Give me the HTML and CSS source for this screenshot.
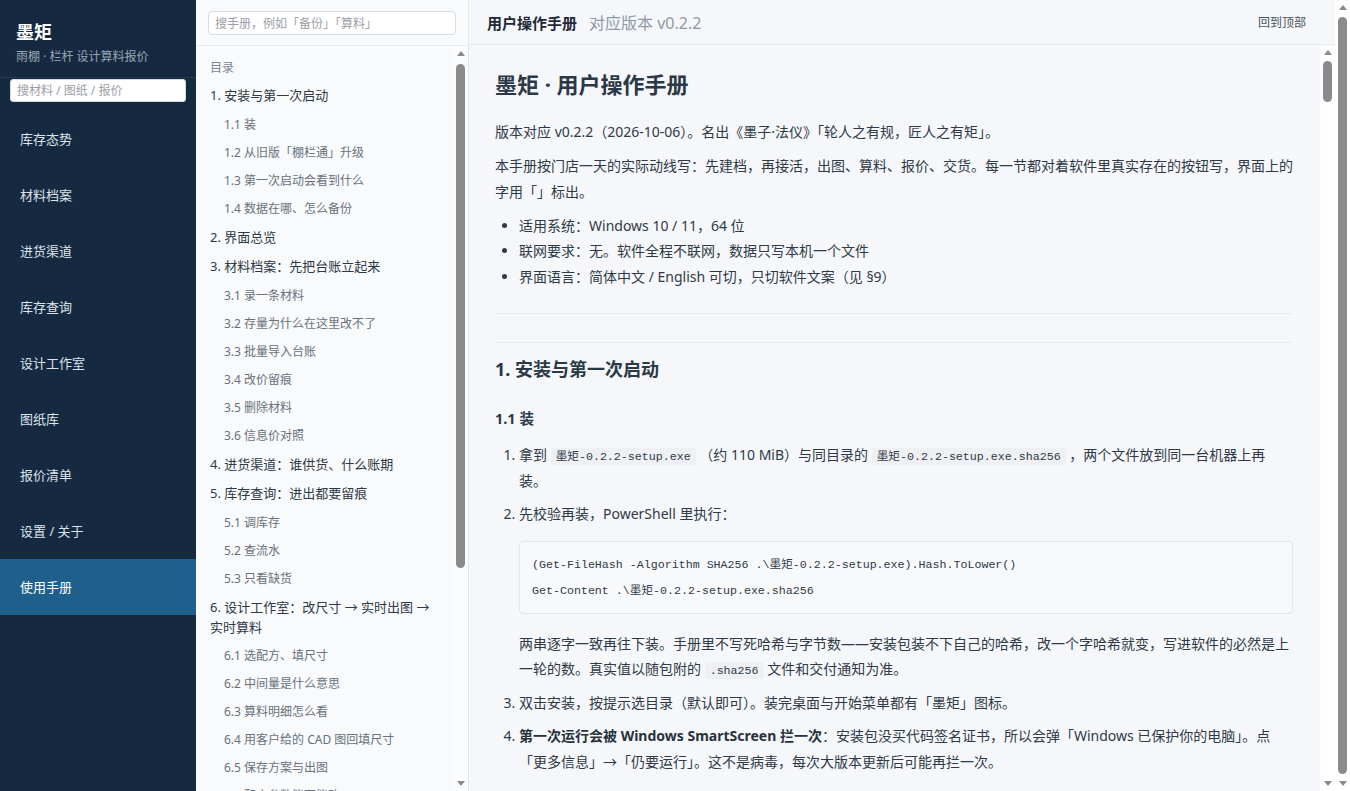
FILE: index.html
```html
<!DOCTYPE html>
<html lang="zh-CN">
<head>
<meta charset="utf-8">
<title>墨矩 · 用户操作手册</title>
<link rel="stylesheet" href="styles.css">
</head>
<body>
<div class="app">
  <aside class="sidebar">
    <div class="brand">
      <div class="brand-name">墨矩</div>
      <div class="brand-sub">雨棚 · 栏杆 设计算料报价</div>
    </div>
    <input class="side-search" type="text" placeholder="搜材料 / 图纸 / 报价">
    <nav class="nav">
      <a class="nav-item" href="#">库存态势</a>
      <a class="nav-item" href="#">材料档案</a>
      <a class="nav-item" href="#">进货渠道</a>
      <a class="nav-item" href="#">库存查询</a>
      <a class="nav-item" href="#">设计工作室</a>
      <a class="nav-item" href="#">图纸库</a>
      <a class="nav-item" href="#">报价清单</a>
      <a class="nav-item" href="#">设置 / 关于</a>
      <a class="nav-item active" href="#">使用手册</a>
    </nav>
  </aside>

  <section class="toc-pane">
    <div class="toc-search-wrap">
      <input class="toc-search" type="text" placeholder="搜手册，例如「备份」「算料」">
    </div>
    <div class="pane-body">
      <div class="toc-scroll">
        <div class="toc-title">目录</div>
        <a class="toc-top" href="#s1">1. 安装与第一次启动</a>
        <a class="toc-sub" href="#s1-1">1.1 装</a>
        <a class="toc-sub" href="#s1-2">1.2 从旧版「棚栏通」升级</a>
        <a class="toc-sub" href="#s1-3">1.3 第一次启动会看到什么</a>
        <a class="toc-sub" href="#s1-4">1.4 数据在哪、怎么备份</a>
        <a class="toc-top" href="#s2">2. 界面总览</a>
        <a class="toc-top" href="#s3">3. 材料档案：先把台账立起来</a>
        <a class="toc-sub" href="#s3-1">3.1 录一条材料</a>
        <a class="toc-sub" href="#s3-2">3.2 存量为什么在这里改不了</a>
        <a class="toc-sub" href="#s3-3">3.3 批量导入台账</a>
        <a class="toc-sub" href="#s3-4">3.4 改价留痕</a>
        <a class="toc-sub" href="#s3-5">3.5 删除材料</a>
        <a class="toc-sub" href="#s3-6">3.6 信息价对照</a>
        <a class="toc-top" href="#s4">4. 进货渠道：谁供货、什么账期</a>
        <a class="toc-top" href="#s5">5. 库存查询：进出都要留痕</a>
        <a class="toc-sub" href="#s5-1">5.1 调库存</a>
        <a class="toc-sub" href="#s5-2">5.2 查流水</a>
        <a class="toc-sub" href="#s5-3">5.3 只看缺货</a>
        <a class="toc-top" href="#s6">6. 设计工作室：改尺寸 → 实时出图 → 实时算料</a>
        <a class="toc-sub" href="#s6-1">6.1 选配方、填尺寸</a>
        <a class="toc-sub" href="#s6-2">6.2 中间量是什么意思</a>
        <a class="toc-sub" href="#s6-3">6.3 算料明细怎么看</a>
        <a class="toc-sub" href="#s6-4">6.4 用客户给的 CAD 图回填尺寸</a>
        <a class="toc-sub" href="#s6-5">6.5 保存方案与出图</a>
        <a class="toc-sub" href="#s6-6">6.6 配方参数能不能改</a>
        <a class="toc-top" href="#s7">7. 图纸库：每张图都找得回来</a>
        <a class="toc-sub" href="#s7-1">7.1 按客户找图</a>
        <a class="toc-sub" href="#s7-2">7.2 改版与作废</a>
        <a class="toc-top" href="#s8">8. 报价清单：从算料到签字</a>
        <a class="toc-sub" href="#s8-1">8.1 单价从哪来</a>
        <a class="toc-sub" href="#s8-2">8.2 折扣、抹零与导出</a>
        <a class="toc-top" href="#s9">9. 设置 / 关于</a>
        <a class="toc-sub" href="#s9-1">9.1 切换语言</a>
        <a class="toc-top" href="#s10">10. 常见问题</a>
      </div>
      <div class="vbar">
        <span class="vbar-up"></span>
        <div class="vbar-track"><span class="vbar-thumb toc-thumb"></span></div>
        <span class="vbar-down"></span>
      </div>
    </div>
  </section>

  <main class="main">
    <header class="main-header">
      <div class="header-left">
        <span class="header-title">用户操作手册</span>
        <span class="header-ver">对应版本 v0.2.2</span>
      </div>
      <a class="back-top" href="#top">回到顶部</a>
    </header>
    <div class="pane-body">
      <div class="doc-scroll">
        <article class="doc" id="top">
          <h1>墨矩 · 用户操作手册</h1>
          <p>版本对应 v0.2.2（2026-10-06）。名出《墨子·法仪》「轮人之有规，匠人之有矩」。</p>
          <p>本手册按门店一天的实际动线写：先建档，再接活，出图、算料、报价、交货。每一节都对着软件里真实存在的按钮写，界面上的字用「」标出。</p>
          <ul>
            <li>适用系统：Windows 10 / 11，64 位</li>
            <li>联网要求：无。软件全程不联网，数据只写本机一个文件</li>
            <li>界面语言：简体中文 / English 可切，只切软件文案（见 §9）</li>
          </ul>
          <hr>

          <section class="sec" id="s1">
            <h2>1. 安装与第一次启动</h2>
            <h3 id="s1-1">1.1 装</h3>
            <ol>
              <li>拿到 <code>墨矩-0.2.2-setup.exe</code> （约 110 MiB）与同目录的 <code>墨矩-0.2.2-setup.exe.sha256</code> ，两个文件放到同一台机器上再装。</li>
              <li>先校验再装，PowerShell 里执行：
                <pre class="codeblock">(Get-FileHash -Algorithm SHA256 .\墨矩-0.2.2-setup.exe).Hash.ToLower()
Get-Content .\墨矩-0.2.2-setup.exe.sha256</pre>
                <p>两串逐字一致再往下装。手册里不写死哈希与字节数——安装包装不下自己的哈希，改一个字哈希就变，写进软件的必然是上一轮的数。真实值以随包附的 <code>.sha256</code> 文件和交付通知为准。</p>
              </li>
              <li>双击安装，按提示选目录（默认即可）。装完桌面与开始菜单都有「墨矩」图标。</li>
              <li><strong>第一次运行会被 Windows SmartScreen 拦一次</strong>：安装包没买代码签名证书，所以会弹「Windows 已保护你的电脑」。点「更多信息」→「仍要运行」。这不是病毒，每次大版本更新后可能再拦一次。</li>
            </ol>

            <h3 id="s1-2">1.2 从旧版「棚栏通」升级</h3>
            <p>旧版的数据文件不会被覆盖。第一次启动时软件会问「是否导入旧版台账」，点「导入」后按提示选中旧文件即可，原文件原样保留，出错可以重来。</p>
            <ol>
              <li>先在旧版里做一次完整备份，备份文件放到 U 盘或另一块硬盘。</li>
              <li>关掉旧版，再打开墨矩。导入过程中不要关机，台账大时可能要一两分钟。</li>
              <li>导入完去「材料档案」抽查几条，单价与存量对得上再开始用。</li>
            </ol>

            <h3 id="s1-3">1.3 第一次启动会看到什么</h3>
            <p>左边是模块导航，从上到下就是门店一天的动线。默认打开「库存态势」，台账为空时会提示先去「材料档案」录材料。</p>
            <p>右上角没有登录按钮——软件不联网，也没有账号，谁坐在这台电脑前谁就是操作人。需要区分经手人时，在「设置 / 关于」里填上名字。</p>

            <h3 id="s1-4">1.4 数据在哪、怎么备份</h3>
            <p>全部数据只写在一个文件里，默认位置是「文档」下的 <code>墨矩\data.db</code> 。备份就是把这个文件复制走，恢复就是把它复制回来。</p>
            <ul>
              <li>每天收工前在「设置 / 关于」点「立即备份」，软件会按日期生成一份副本</li>
              <li>副本最多保留 30 份，更早的自动清掉</li>
              <li>换电脑时，把最新副本拷过去，在新电脑上点「从备份恢复」</li>
            </ul>
          </section>

          <section class="sec" id="s2">
            <h2>2. 界面总览</h2>
            <p>界面分三栏：最左是模块导航，中间是当前模块的列表或目录，右边是详情或编辑区。所有表格都能点表头排序，所有输入框改完按回车或点别处即保存。</p>
            <ul>
              <li>顶部搜索框只在当前模块里搜</li>
              <li>红色数字表示缺货或低于安全库存</li>
              <li>灰色的按钮表示当前条件下不能操作，鼠标悬停会说明原因</li>
            </ul>
          </section>

          <section class="sec" id="s3">
            <h2>3. 材料档案：先把台账立起来</h2>
            <h3 id="s3-1">3.1 录一条材料</h3>
            <p>点「新增材料」，依次填名称、规格、单位、单价与安全库存。名称加规格不能重复，重复时软件会提示并定位到已有那条。</p>
            <h3 id="s3-2">3.2 存量为什么在这里改不了</h3>
            <p>存量只能经「库存查询」里的进出操作改变，这样每一次变动都有流水可查。档案里只显示当前存量，不能手填。</p>
            <h3 id="s3-3">3.3 批量导入台账</h3>
            <p>点「导入」，选择按模板整理好的表格文件。导入前会先预览，有问题的行标红，确认无误再写入。</p>
            <h3 id="s3-4">3.4 改价留痕</h3>
            <p>每次改单价都会记下时间、旧价与新价。已经出过的报价单不跟着变，仍按出单当时的价格。</p>
            <h3 id="s3-5">3.5 删除材料</h3>
            <p>被方案或报价引用过的材料不能删除，只能「停用」。停用后不再出现在选料列表里，历史记录照常可查。</p>
            <h3 id="s3-6">3.6 信息价对照</h3>
            <p>可以给每条材料填一个参考信息价，列表里会用颜色标出进价高于参考价的材料，方便议价。</p>
          </section>

          <section class="sec" id="s4">
            <h2>4. 进货渠道：谁供货、什么账期</h2>
            <p>记下每家供应商的联系人、电话、供哪些材料与结算账期。进货时选供应商，流水里就能按供应商汇总应付款。</p>
          </section>

          <section class="sec" id="s5">
            <h2>5. 库存查询：进出都要留痕</h2>
            <h3 id="s5-1">5.1 调库存</h3>
            <p>进货点「入库」，领料点「出库」，盘点差异点「盘点调整」。每次都要填经手人与备注。</p>
            <h3 id="s5-2">5.2 查流水</h3>
            <p>按材料、日期、经手人筛选，结果可导出为表格。</p>
            <h3 id="s5-3">5.3 只看缺货</h3>
            <p>勾选「只看缺货」，列表只剩低于安全库存的材料，可直接生成采购单。</p>
          </section>

          <section class="sec" id="s6">
            <h2>6. 设计工作室：改尺寸 → 实时出图 → 实时算料</h2>
            <h3 id="s6-1">6.1 选配方、填尺寸</h3>
            <p>先选雨棚或栏杆的配方，再填宽、深、高等尺寸。每改一个数，右边的图与算料明细立刻跟着变。</p>
            <h3 id="s6-2">6.2 中间量是什么意思</h3>
            <p>中间量是配方根据尺寸推出来的数，比如立柱根数、檩条间距。它们只读，想改就回头改尺寸或配方。</p>
            <h3 id="s6-3">6.3 算料明细怎么看</h3>
            <p>每行一种材料：用量、损耗、合计与金额。点某一行，图上对应的构件会高亮。</p>
            <h3 id="s6-4">6.4 用客户给的 CAD 图回填尺寸</h3>
            <p>点「导入 CAD」，选中客户发来的图纸，软件读出外轮廓尺寸后回填到表单，再人工核对一遍。</p>
            <h3 id="s6-5">6.5 保存方案与出图</h3>
            <p>点「保存方案」会同时存入图纸库；点「出图」生成可打印的施工图。</p>
            <h3 id="s6-6">6.6 配方参数能不能改</h3>
            <p>可以，在配方页复制一份再改，原配方保持不动。</p>
          </section>

          <section class="sec" id="s7">
            <h2>7. 图纸库：每张图都找得回来</h2>
            <h3 id="s7-1">7.1 按客户找图</h3>
            <p>按客户名、地址或日期搜索，双击打开即回到设计工作室继续改。</p>
            <h3 id="s7-2">7.2 改版与作废</h3>
            <p>每次保存都是新版本，旧版本留着可比对；作废的图纸不会出现在默认列表里。</p>
          </section>

          <section class="sec" id="s8">
            <h2>8. 报价清单：从算料到签字</h2>
            <h3 id="s8-1">8.1 单价从哪来</h3>
            <p>单价取自材料档案的当前价，人工费按配方里的工时计算。</p>
            <h3 id="s8-2">8.2 折扣、抹零与导出</h3>
            <p>折扣与抹零都会写进报价单备注，客户看得到原价与优惠。点「导出」生成 PDF，可直接打印或发给客户。</p>
          </section>

          <section class="sec" id="s9">
            <h2>9. 设置 / 关于</h2>
            <h3 id="s9-1">9.1 切换语言</h3>
            <p>在「设置 / 关于」里切换简体中文或 English，只切软件界面文案，已录入的数据不翻译。备份与恢复见 §1.4。</p>
          </section>

          <section class="sec" id="s10">
            <h2>10. 常见问题</h2>
            <p>打不开、算不对、导不出时，先做一次备份，再把备份文件与问题截图一起发给交付人员。</p>
          </section>
        </article>
      </div>
      <div class="vbar">
        <span class="vbar-up"></span>
        <div class="vbar-track"><span class="vbar-thumb doc-thumb"></span></div>
        <span class="vbar-down"></span>
      </div>
    </div>
  </main>

  <div class="vbar page-bar">
    <span class="vbar-up"></span>
    <div class="vbar-track"><span class="vbar-thumb page-thumb"></span></div>
    <span class="vbar-down"></span>
  </div>
</div>
</body>
</html>
```

FILE: styles.css
```css
* { box-sizing: border-box; }

html, body {
  margin: 0;
  padding: 0;
}

body {
  font-family: "Noto Sans", "Noto Sans CJK SC", sans-serif;
  color: #2f3a46;
  background: #f5f7fa;
  overflow: hidden;
}

.app {
  display: flex;
  height: 100vh;
}

/* ---------- classic scrollbar look ---------- */
.vbar {
  width: 15px;
  flex: 0 0 15px;
  background: #ffffff;
  display: flex;
  flex-direction: column;
  align-items: center;
}

.vbar-up,
.vbar-down {
  flex: 0 0 15px;
  width: 15px;
  display: flex;
  align-items: center;
  justify-content: center;
}

.vbar-up::before,
.vbar-down::before {
  content: "";
  width: 0;
  height: 0;
  border-left: 4px solid transparent;
  border-right: 4px solid transparent;
}

.vbar-up::before { border-bottom: 5px solid #8a8a8a; }
.vbar-down::before { border-top: 5px solid #8a8a8a; }

.vbar-track {
  flex: 1;
  width: 15px;
  display: flex;
  flex-direction: column;
  align-items: center;
}

.vbar-thumb {
  display: block;
  width: 9px;
  background: #8b8b8b;
  border-radius: 5px;
}

.toc-thumb { margin-top: 3px; height: 504px; }
.doc-thumb { margin-top: 1px; height: 41px; }
.page-thumb { margin-top: 2px; height: 757px; }

/* ---------- sidebar ---------- */
.sidebar {
  width: 196px;
  flex: 0 0 196px;
  background: #152a40;
  display: flex;
  flex-direction: column;
}

.brand {
  padding: 19px 16px 10px;
  border-bottom: 1px solid #24384e;
  height: 78px;
}

.brand-name {
  font-size: 18px;
  font-weight: 700;
  color: #ffffff;
  line-height: 26px;
}

.brand-sub {
  font-size: 12px;
  color: #9aa7b6;
  line-height: 18px;
  margin-top: 3px;
}

.side-search {
  margin: 1px 10px 9px;
  height: 23px;
  border: 1px solid #d5dae0;
  border-radius: 3px;
  padding: 0 6px;
  font-size: 12px;
  font-family: "Noto Sans", "Noto Sans CJK SC", sans-serif;
  color: #333;
  background: #fff;
  outline: none;
}

.side-search::placeholder { color: #9a9ea5; }

.nav {
  display: flex;
  flex-direction: column;
}

.nav-item {
  height: 56px;
  line-height: 56px;
  padding: 0 20px;
  font-size: 13px;
  color: #dce3eb;
  text-decoration: none;
}

.nav-item.active {
  background: #1f5f8b;
  color: #ffffff;
}

/* ---------- toc ---------- */
.toc-pane {
  width: 273px;
  flex: 0 0 273px;
  background: #f9fafc;
  border-right: 1px solid #e3e7ec;
  display: flex;
  flex-direction: column;
  min-height: 0;
}

.toc-search-wrap {
  padding: 11px 12px 10px;
  border-bottom: 1px solid #e6e9ee;
}

.toc-search {
  display: block;
  width: 100%;
  height: 24px;
  border: 1px solid #d8dde3;
  border-radius: 4px;
  background: #fff;
  padding: 0 6px;
  font-size: 12px;
  font-family: "Noto Sans", "Noto Sans CJK SC", sans-serif;
  outline: none;
}

.toc-search::placeholder { color: #9a9ea5; }

.pane-body {
  flex: 1;
  min-height: 0;
  display: flex;
}

.toc-pane .vbar { background: #fbfcfd; }

.toc-scroll {
  flex: 1;
  min-width: 0;
  overflow-y: auto;
  padding: 13px 0 20px;
}

.toc-title {
  font-size: 12px;
  line-height: 18px;
  color: #7a8591;
  padding: 0 14px;
  margin-bottom: 3.5px;
}

.toc-top,
.toc-sub {
  display: block;
  text-decoration: none;
  line-height: 20px;
}

.toc-top {
  font-size: 13px;
  color: #2d3945;
  padding: 4.5px 14px 3.5px;
  margin-top: 1.5px;
}

.toc-sub {
  font-size: 12px;
  color: #68717b;
  padding: 6px 14px 2px 28px;
}

/* ---------- main ---------- */
.main {
  flex: 1;
  min-width: 0;
  display: flex;
  flex-direction: column;
  background: #f5f7fa;
}

.main-header {
  height: 45px;
  flex: 0 0 45px;
  border-bottom: 1px solid #e6e9ee;
  display: flex;
  align-items: center;
  justify-content: space-between;
  padding: 0 29px 0 18px;
}

.header-left {
  display: flex;
  align-items: baseline;
  gap: 12px;
}

.header-title {
  font-size: 15px;
  font-weight: 700;
  color: #1f2a36;
}

.header-ver {
  font-size: 16px;
  color: #8e99a5;
}

.back-top {
  font-size: 12px;
  color: #4a5560;
  text-decoration: none;
}

.doc-scroll {
  flex: 1;
  min-width: 0;
  overflow-y: auto;
}

.doc {
  padding: 24px 27px 60px 26px;
  font-size: 14px;
  line-height: 25.5px;
}

.doc h1 {
  font-size: 22px;
  line-height: 30px;
  margin: 0 0 20px;
  color: #2b3846;
}

.doc h2 {
  font-size: 18px;
  line-height: 28px;
  margin: 0;
  color: #2b3846;
}

.doc h3 {
  font-size: 14.5px;
  line-height: 24px;
  margin: 23px 0 12px;
  color: #2b3846;
}

.doc p {
  margin: 0 0 8.5px;
}

.doc ul,
.doc ol {
  margin: 0 0 8px;
  padding-left: 24px;
}

.doc ol > li {
  margin-bottom: 8px;
}

.doc li > p {
  margin: 0;
}

.doc strong {
  font-weight: 700;
  color: #27323d;
}

.doc hr {
  border: 0;
  border-top: 1px solid #e8ebef;
  height: 0;
  margin: 24px 0 28px;
}

.sec {
  border-top: 1px solid #e8ebef;
  padding-top: 12px;
  margin-bottom: 30px;
}

.doc code {
  font-family: "Liberation Mono", "Noto Sans CJK SC", monospace;
  font-size: 11.65px;
  line-height: 1;
  background: #eef0f3;
  border-radius: 3px;
  padding: 2px 5px;
}

.codeblock {
  margin: 14px 0 17px;
  padding: 10px 12px 9px;
  background: #f8f9fb;
  border: 1px solid #e3e6ea;
  border-radius: 4px;
  font-family: "Liberation Mono", "Noto Sans CJK SC", monospace;
  font-size: 11.65px;
  line-height: 26px;
  color: #2f3a46;
  white-space: pre;
  overflow-x: auto;
}
```
